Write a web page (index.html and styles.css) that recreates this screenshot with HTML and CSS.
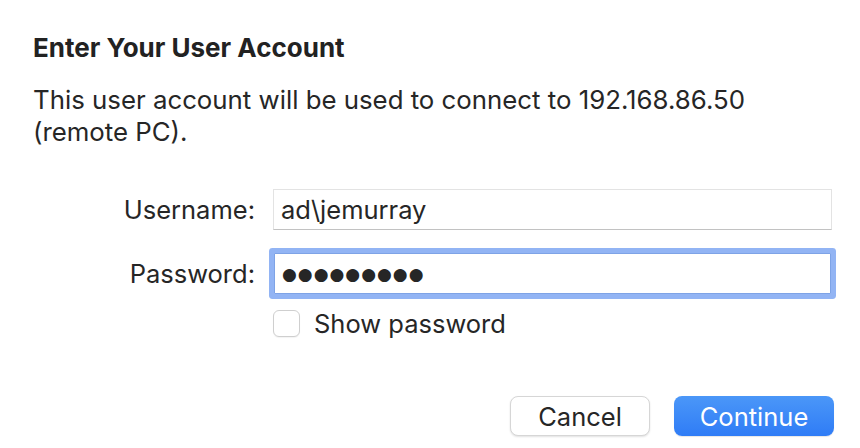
FILE: index.html
```html
<!DOCTYPE html>
<html>
<head>
<meta charset="utf-8">
<link rel="stylesheet" href="styles.css">
</head>
<body>
<div class="dialog">
  <h1 class="title">Enter Your User Account</h1>
  <p class="desc">This user account will be used to connect to 192.168.86.50 (remote PC).</p>
  <div class="form">
    <div class="label">Username:</div>
    <div class="field"><span class="value">ad\jemurray</span></div>
    <div class="label label-pw">Password:</div>
    <div class="field field-focus"><span class="dots">●●●●●●●●●</span></div>
    <div></div>
    <label class="check"><span class="box"></span><span class="check-text">Show password</span></label>
  </div>
  <div class="buttons">
    <button class="btn btn-cancel">Cancel</button>
    <button class="btn btn-primary">Continue</button>
  </div>
</div>
</body>
</html>
```
FILE: styles.css
```css
html, body {
  margin: 0;
  padding: 0;
  background: #ffffff;
}
body {
  width: 860px;
  height: 448px;
  overflow: hidden;
  font-family: Inter, "Liberation Sans", sans-serif;
  color: #262626;
}
.dialog {
  padding: 32px 26px 0 33px;
  display: flex;
  flex-direction: column;
}
.title {
  margin: 0;
  font-size: 26px;
  font-weight: 700;
  line-height: 32px;
  color: #222;
}
.desc {
  margin: 20px 0 0 0;
  font-size: 25.8px;
  line-height: 32px;
  max-width: 770px;
  color: #262626;
}
.form {
  margin-top: 41px;
  display: grid;
  grid-template-columns: 222px 559px;
  column-gap: 18px;
  row-gap: 23px;
  align-items: center;
}
.label {
  text-align: right;
  font-size: 25.5px;
  line-height: 41px;
}
.field {
  height: 41px;
  box-sizing: border-box;
  border: 1px solid #e3e3e3;
  border-bottom-color: #c2c2c2;
  background: #fff;
  display: flex;
  align-items: center;
  padding-left: 7px;
  font-size: 25.5px;
}
.field-focus {
  border: 1px solid #7ea3e6;
  box-shadow: 0 0 0 5px #92b4f4;
  border-radius: 1px;
  margin: 0 1px;
}
.dots {
  font-family: "DejaVu Sans", sans-serif;
  font-size: 17px;
  letter-spacing: 1px;
  color: #262626;
}
.check {
  display: flex;
  align-items: center;
  gap: 14px;
  margin-top: -9px;
}
.box {
  width: 27px;
  height: 27px;
  box-sizing: border-box;
  border: 1px solid #cfcfcf;
  border-radius: 6px;
  background: #fff;
  box-shadow: 0 1px 1px rgba(0,0,0,0.05);
}
.check-text {
  font-size: 25.5px;
}
.buttons {
  margin-top: 57px;
  display: flex;
  justify-content: flex-end;
  gap: 24px;
}
.btn {
  height: 40px;
  border-radius: 8px;
  font-family: Inter, "Liberation Sans", sans-serif;
  font-size: 25.5px;
  padding: 0;
  cursor: default;
}
.btn-cancel {
  width: 140px;
  background: #fff;
  color: #262626;
  border: 1px solid #d6d6d6;
  box-shadow: 0 1px 2px rgba(0,0,0,0.12);
}
.btn-primary {
  width: 160px;
  color: #fff;
  border: none;
  background: linear-gradient(#4b97f8, #2f7cf6);
  box-shadow: 0 1px 1px rgba(0,0,0,0.1);
}
```
